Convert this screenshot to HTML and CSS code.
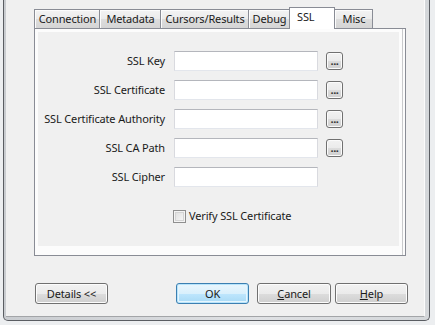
FILE: index.html
```html
<!DOCTYPE html>
<html>
<head>
<meta charset="utf-8">
<link rel="stylesheet" href="styles.css">
</head>
<body>
<div class="window">
  <div class="frame">
    <div class="client">
      <div class="tabs">
        <div class="tab t-conn">Connection</div>
        <div class="tab t-meta">Metadata</div>
        <div class="tab t-curs">Cursors/Results</div>
        <div class="tab t-debug">Debug</div>
        <div class="tab t-ssl selected">SSL</div>
        <div class="tab t-misc">Misc</div>
      </div>
      <div class="panel">
        <div class="page">
          <div class="form">
            <label class="lbl">SSL Key</label>
            <div class="input"></div>
            <div class="browse">...</div>

            <label class="lbl">SSL Certificate</label>
            <div class="input"></div>
            <div class="browse">...</div>

            <label class="lbl">SSL Certificate Authority</label>
            <div class="input"></div>
            <div class="browse">...</div>

            <label class="lbl">SSL CA Path</label>
            <div class="input"></div>
            <div class="browse">...</div>

            <label class="lbl">SSL Cipher</label>
            <div class="input"></div>
            <div></div>
          </div>
          <div class="check-row">
            <span class="checkbox"></span>
            <span class="check-label">Verify SSL Certificate</span>
          </div>
        </div>
      </div>
      <div class="buttons">
        <div class="btn btn-details">Details &lt;&lt;</div>
        <div class="btn btn-ok">OK</div>
        <div class="btn btn-cancel"><u>C</u>ancel</div>
        <div class="btn btn-help"><u>H</u>elp</div>
      </div>
    </div>
  </div>
</div>
</body>
</html>
```

FILE: styles.css
```css
* { box-sizing: border-box; }
html, body { margin: 0; padding: 0; }
body {
  font-family: "Noto Sans", "Open Sans", sans-serif;
  font-size: 11px;
  letter-spacing: -0.15px;
  color: #1a1a1a;
  background: #e9eaec;
}
.window {
  width: 435px;
  height: 325px;
  display: flex;
  flex-direction: column;
  background: #eceef0;
}
.frame {
  flex: 1;
  margin: 0 5px 4px 3px;
  border: 1px solid #5a5d62;
  border-top: 0;
  border-radius: 0 0 5px 5px;
  padding: 0 4px 3px 2px;
  background: linear-gradient(to right, #c9ccd0, #dfe1e4 60%, #d4d7da);
  display: flex;
}
.client {
  flex: 1;
  background: #f0f0f0;
  border-right: 1px solid #fbfbfb;
  border-bottom: 1px solid #a3a5a8;
  display: flex;
  flex-direction: column;
}
.tabs {
  display: flex;
  align-items: flex-end;
  margin-top: 7px;
  padding-left: 28px;
  height: 21px;
  position: relative;
  z-index: 2;
}
.tab {
  height: 19px;
  border: 1px solid #898c95;
  border-bottom: 0;
  margin-left: -1px;
  background: linear-gradient(to bottom, #f3f3f3 0%, #ebebeb 50%, #dddddd 51%, #d5d5d5 100%);
  box-shadow: inset 1px 1px 0 #fcfcfc;
  text-align: center;
  line-height: 17px;
  padding-left: 1px;
  white-space: nowrap;
}
.tab.t-conn { margin-left: 0; width: 66px; }
.tab.t-meta { width: 62px; }
.tab.t-curs { width: 89px; }
.tab.t-debug { width: 42px; }
.tab.t-ssl { width: 46px; }
.tab.t-misc { width: 39px; }
.tab.selected {
  height: 22px;
  margin-bottom: -1px;
  background: #ffffff;
  box-shadow: none;
  position: relative;
  z-index: 3;
  line-height: 18px;
  text-align: left;
  padding-left: 7px;
}
.panel {
  margin-left: 28px;
  width: 372px;
  height: 228px;
  border: 1px solid #898c95;
  background: #fcfcfc;
  padding: 3px 5px 9px 3px;
  box-shadow: inset -2px 0 0 #fcfcfc, inset -3px 0 0 #c9cacc;
  position: relative;
  z-index: 1;
}
.page {
  height: 100%;
  width: 361px;
  background: #f0f0f0;
  padding-top: 19px;
}
.form {
  display: grid;
  grid-template-columns: 127px 145px 17px;
  grid-auto-rows: 20px;
  column-gap: 8px;
  row-gap: 9px;
  align-items: center;
}
.lbl {
  text-align: right;
  white-space: nowrap;
  line-height: 20px;
}
.input {
  height: 20px;
  margin-left: 1px;
  background: #fff;
  border: 1px solid #d9dadf;
  border-top-color: #b4b6bc;
  border-bottom-color: #e3e6ec;
}
.browse {
  width: 17px;
  height: 18px;
  border: 1px solid #707070;
  border-radius: 3px;
  background: linear-gradient(to bottom, #f2f2f2 0%, #ebebeb 50%, #dddddd 51%, #cfcfcf 100%);
  box-shadow: inset 0 0 0 1px #fbfbfb;
  font-size: 11px;
  font-weight: bold;
  line-height: 11px;
  text-align: center;
  letter-spacing: -0.5px;
  padding-top: 2px;
  color: #333;
}
.check-row {
  display: flex;
  align-items: center;
  margin-top: 22px;
  padding-left: 135px;
  height: 14px;
}
.checkbox {
  width: 13px;
  height: 13px;
  border: 1px solid #8f8f8f;
  background: linear-gradient(135deg, #dcdcdc, #fafafa);
  box-shadow: inset 0 0 0 1px #f4f4f4, inset 0 0 0 2px #d4d4d4;
  margin-right: 3px;
}
.check-label {
  white-space: nowrap;
  line-height: 14px;
}
.buttons {
  display: flex;
  margin-top: 27px;
  padding-left: 29px;
}
.btn {
  height: 21px;
  width: 73px;
  border: 1px solid #707070;
  border-radius: 3px;
  background: linear-gradient(to bottom, #f2f2f2 0%, #ebebeb 50%, #dddddd 51%, #cfcfcf 100%);
  box-shadow: inset 0 0 0 1px #fcfcfc;
  text-align: center;
  line-height: 19px;
  white-space: nowrap;
}
.btn u { text-decoration: underline; text-underline-offset: 1px; }
.btn-ok {
  margin-left: 68px;
  border-color: #3c7fb1;
  background: linear-gradient(to bottom, #eaf6fd 0%, #d9f0fc 50%, #bee6fd 51%, #a7d9f5 100%);
  box-shadow: inset 0 0 0 1px #b8e4fb, inset 0 0 0 2px #e6f5fd;
}
.btn-cancel { margin-left: 8px; width: 74px; }
.btn-help { margin-left: 4px; }
```
